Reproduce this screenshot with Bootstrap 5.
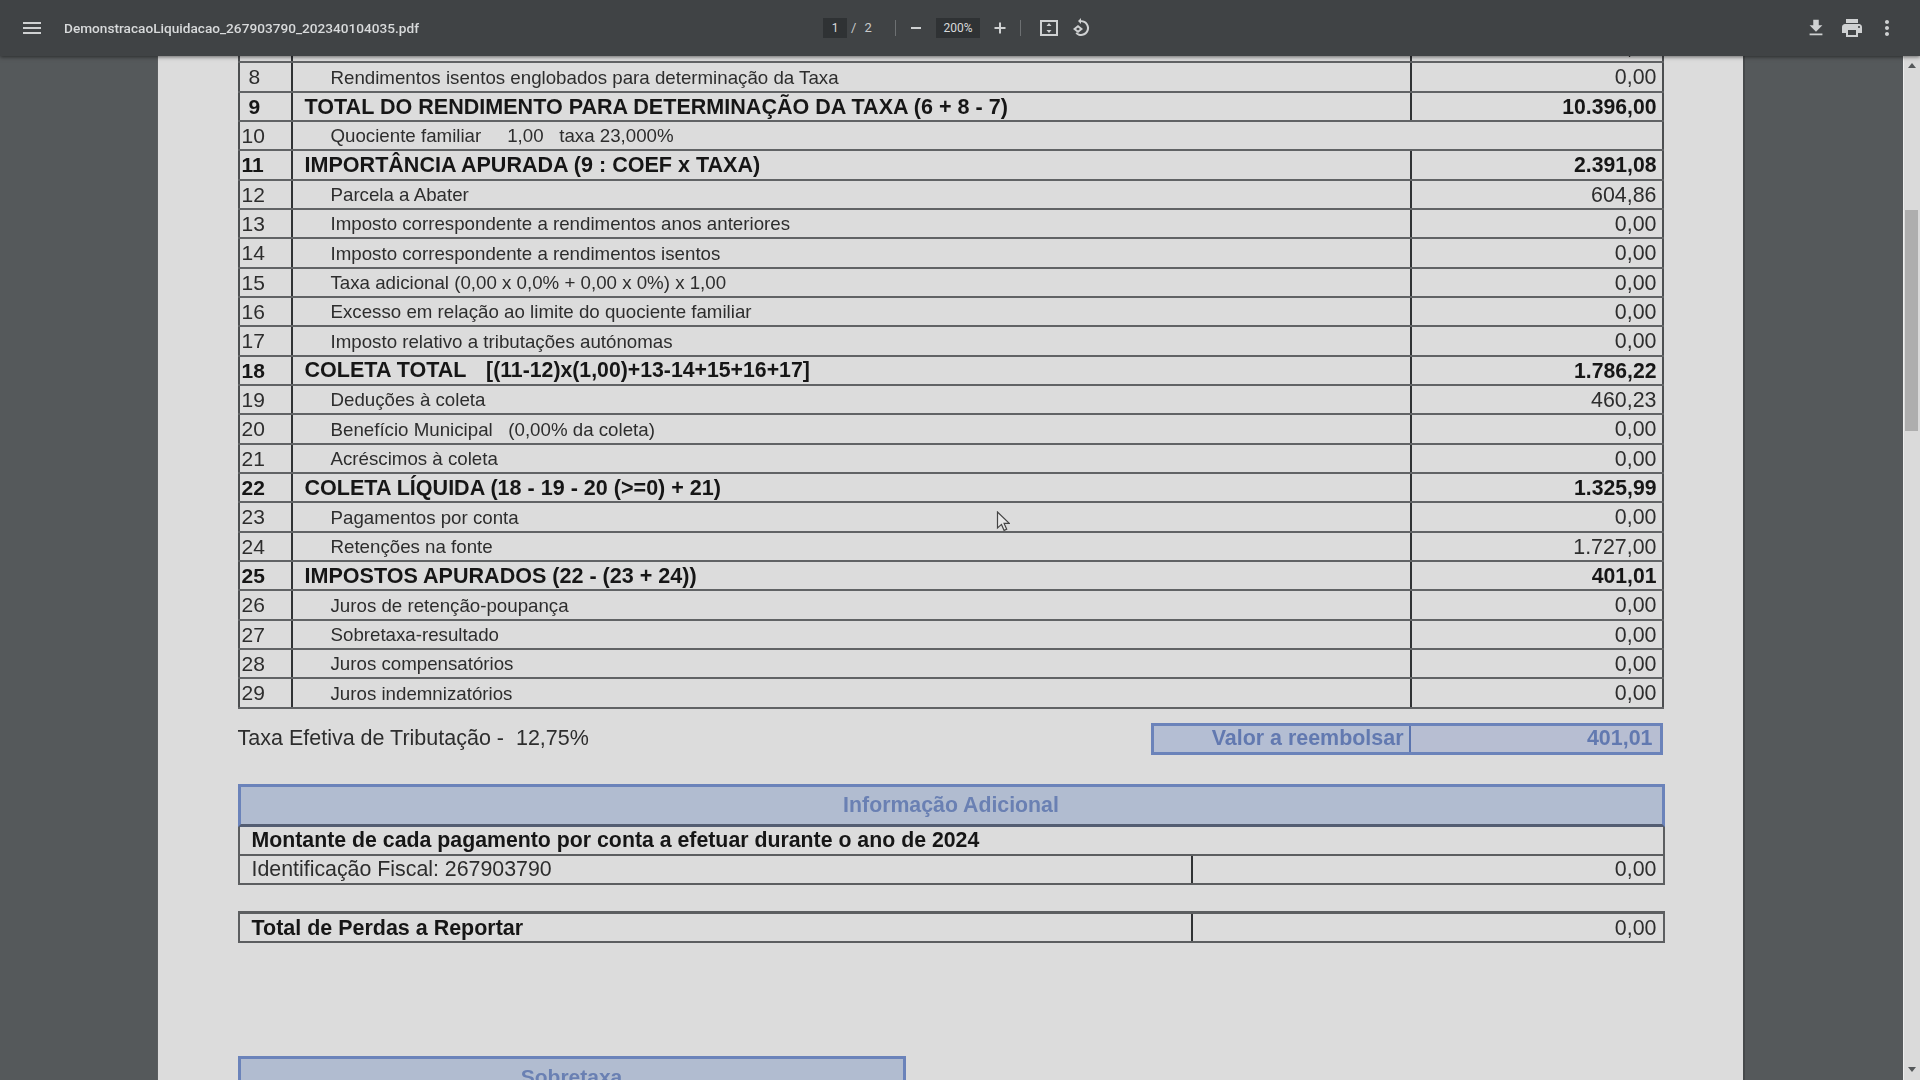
<!DOCTYPE html>
<html lang="pt">
<head>
<meta charset="utf-8">
<title>Demonstracao</title>
<link href="https://cdn.jsdelivr.net/npm/bootstrap@5.3.0/dist/css/bootstrap.min.css" rel="stylesheet">
<style>
html,body{height:100%;overflow:hidden;background:#55595b;font-family:"Liberation Sans",Arial,sans-serif;}
.pv-shell{height:1080px;width:1920px;}
.pv-bar{height:56px;background:#404345;color:#d8dadb;box-shadow:0 1px 4px rgba(0,0,0,.55);z-index:2;flex:none;position:relative;font-family:Roboto,sans-serif;}
.pv-ico{fill:#cfd1d2;display:block;flex:none;}
.pv-menu{margin-left:20px;margin-right:20px;}
.pv-title{font-size:13.65px;font-weight:500;width:759px;white-space:nowrap;filter:blur(.3px);}
.pv-pagebox{width:24px;height:20px;background:#2f3234;text-align:center;font-size:12px;line-height:20px;}
.pv-of{font-size:13px;color:#c9cbcc;margin-left:4px;width:44px;word-spacing:5px;}
.pv-sep{width:1px;height:16px;background:#6d7072;}
.pv-zoom{width:44px;height:20px;background:#2f3234;text-align:center;font-size:12px;line-height:20px;}
.pv-gap-fit{margin-left:17px;}
.pv-gap-rot{margin-left:10px;}
.pv-gap-dl{margin-left:713px;}
.pv-gap-pr{margin-left:13px;}
.pv-gap-more{margin-left:11px;}
.pv-body{height:1024px;}
.pv-view{flex:1 1 auto;overflow:hidden;background:#55595b;}
.pv-sheet{width:1588px;margin-right:1px;height:1024px;background:#dcdcdc;padding:0 78px 0 79.5px;border-left:1px solid #5b5e60;border-right:2px solid #46494b;color:#2d2d2d;filter:blur(.45px);flex:none;}
.pv-table{width:1426px;table-layout:fixed;border-collapse:collapse;margin:-23px 0 0;}
.pv-table td{height:29.33px;padding:0;border-bottom:2px solid #616365;line-height:1;white-space:nowrap;overflow:hidden;font-size:18.72px;vertical-align:middle;}
.pv-table .pv-n{width:53px;font-size:21px;border-left:2px solid #4c4e50;border-right:2px solid #303234;padding-left:2px;}
.pv-table .pv-n.pv-one{padding-left:9px;}
.pv-table .pv-v{width:251.5px;font-size:21.4px;text-align:right;border-left:2px solid #303234;border-right:2px solid #4c4e50;padding-right:5px;padding-top:2px;}
.pv-table .pv-l{padding-left:38px;padding-top:2px;}
.pv-table .pv-b{font-weight:700;color:#161616;font-size:21px;}
.pv-table td.pv-lb{padding-left:12px;font-size:21.55px;}
.pv-table .pv-v.pv-b{font-size:21.2px;padding-top:0;}
.pv-table .pv-wide{border-right:2px solid #4c4e50;}
.pv-brk{font-size:21.25px;margin-left:2px;}
.pv-taxa{height:32px;margin-top:14px;width:1425px;}
.pv-taxatxt{font-size:21.5px;}
.pv-reemb{width:512px;height:32px;background:#b4bed3;border:3px solid #6b83ba;color:#6279b0;font-weight:700;font-size:21.45px;}
.pv-reemb>div{line-height:25px;}
.pv-r1{width:257px;padding-right:5px;text-align:right;border-right:2px solid #5b74af;}
.pv-r2{flex:1;padding-right:7px;text-align:right;background:#b7bed2;}
.pv-info{width:1427px;margin-top:29px;}
.pv-head{height:43px;background:#b1bcd0;border:3px solid #6b83ba;border-bottom:3px solid #535d72;text-align:center;color:#6a80b3;font-weight:700;font-size:21.3px;line-height:37px;}
.pv-row{height:29px;border:2px solid #5c5e60;border-top:0;font-size:21.35px;line-height:27px;}
.pv-row .pv-c1{padding-left:12px;flex:none;width:951.5px;white-space:nowrap;}
.pv-row .pv-c2{flex:1;border-left:2px solid #303234;text-align:right;padding-right:6px;font-size:21.4px;}
.pv-row.pv-top{border-top:3px solid #5c5e60;height:32px;margin-top:26px;line-height:28px;}
.pv-bold{font-weight:700;color:#161616;font-size:21.3px;}
.pv-mont{padding-left:12px;}
.pv-row .pv-c1.pv-bold{font-size:21.47px;}
.pv-sobre{width:668px;height:41px;margin-top:113px;background:#b1bcd0;border:3px solid #6b83ba;border-bottom:0;text-align:center;color:#6a80b3;font-weight:700;font-size:21px;line-height:36px;}
.pv-track{width:17px;flex:none;background:#dadada;border-left:1px solid #eeeeee;}
.pv-arrow{width:0;height:0;border-left:4px solid transparent;border-right:4px solid transparent;border-bottom:5px solid #55585a;margin:7px auto 0;}
.pv-thumb{width:13px;height:221px;background:#aeaeae;margin:142px 0 0 1px;}
.pv-arrow.pv-down{transform:rotate(180deg);margin-top:636px;}
.pv-cursor{position:absolute;left:996px;top:511px;z-index:3;}
</style>
</head>
<body>
<div class="pv-shell d-flex flex-column position-relative">
  <nav class="pv-bar d-flex align-items-center">
    <svg class="pv-ico pv-menu" width="24" height="24" viewBox="0 0 24 24"><path d="M3 18h18v-2H3v2zm0-5h18v-2H3v2zm0-7v2h18V6H3z"/></svg>
    <div class="pv-title">DemonstracaoLiquidacao_267903790_202340104035.pdf</div>
    <div class="pv-pagebox">1</div>
    <div class="pv-of">/ 2</div>
    <div class="pv-sep"></div>
    <svg class="pv-ico ms-2" width="24" height="24" viewBox="0 0 24 24"><path d="M7 11h10v2H7z"/></svg>
    <div class="pv-zoom ms-2">200%</div>
    <svg class="pv-ico ms-2" width="24" height="24" viewBox="0 0 24 24"><path d="M17.500 13h-4.500v4.500h-2V13H6.500v-2H11V6.500h2V11h4.500z"/></svg>
    <div class="pv-sep ms-2"></div>
    <svg class="pv-ico pv-gap-fit" width="22" height="22" viewBox="0 0 22 22"><path d="M2 3h18v16H2zm2 2v12h14V5z"/><path d="M11 6l2.500 3h-5zM11 16l-2.500-3h5z"/></svg>
    <svg class="pv-ico pv-gap-rot" width="22" height="22" viewBox="0 0 22 22"><path d="M11 3.200V1L8 4l3 3V5a6 6 0 1 1-4.200 10.300l-1.300 1.300A7.900 7.900 0 1 0 11 3.200z"/><path d="M8 8l-5 4 5 4 5-4zm0 2.400L10 12l-2 1.600L6 12z"/></svg>
    <svg class="pv-ico pv-gap-dl" width="22" height="22" viewBox="0 0 24 24"><path d="M19 9h-4V3H9v6H5l7 7 7-7zM5 18v2h14v-2H5z"/></svg>
    <svg class="pv-ico pv-gap-pr" width="24" height="24" viewBox="0 0 24 24"><path d="M19 8H5c-1.660 0-3 1.340-3 3v6h4v4h12v-4h4v-6c0-1.660-1.340-3-3-3zm-3 11H8v-5h8v5zm3-7c-.55 0-1-.45-1-1s.45-1 1-1 1 .45 1 1-.45 1-1 1zm-1-9H6v4h12V3z"/></svg>
    <svg class="pv-ico pv-gap-more" width="24" height="24" viewBox="0 0 24 24"><path d="M12 8c1.100 0 2-.9 2-2s-.9-2-2-2-2 .9-2 2 .9 2 2 2zm0 2c-1.100 0-2 .9-2 2s.9 2 2 2 2-.9 2-2-.9-2-2-2zm0 6c-1.100 0-2 .9-2 2s.9 2 2 2 2-.9 2-2-.9-2-2-2z"/></svg>
  </nav>
  <div class="pv-body d-flex">
    <main class="pv-view d-flex justify-content-center">
      <div class="pv-sheet">
        <table class="pv-table">
          <tbody>
            <tr><td class="pv-n"></td><td class="pv-l"></td><td class="pv-v">0,00</td></tr>
            <tr><td class="pv-n pv-one">8</td><td class="pv-l">Rendimentos isentos englobados para determinação da Taxa</td><td class="pv-v">0,00</td></tr>
            <tr><td class="pv-n pv-one pv-b">9</td><td class="pv-lb pv-b">TOTAL DO RENDIMENTO PARA DETERMINAÇÃO DA TAXA (6 + 8 - 7)</td><td class="pv-v pv-b">10.396,00</td></tr>
            <tr><td class="pv-n">10</td><td class="pv-l pv-wide" colspan="2">Quociente familiar &nbsp;&nbsp;&nbsp; 1,00 &nbsp; taxa 23,000%</td></tr>
            <tr><td class="pv-n pv-b">11</td><td class="pv-lb pv-b">IMPORTÂNCIA APURADA (9 : COEF x TAXA)</td><td class="pv-v pv-b">2.391,08</td></tr>
            <tr><td class="pv-n">12</td><td class="pv-l">Parcela a Abater</td><td class="pv-v">604,86</td></tr>
            <tr><td class="pv-n">13</td><td class="pv-l">Imposto correspondente a rendimentos anos anteriores</td><td class="pv-v">0,00</td></tr>
            <tr><td class="pv-n">14</td><td class="pv-l">Imposto correspondente a rendimentos isentos</td><td class="pv-v">0,00</td></tr>
            <tr><td class="pv-n">15</td><td class="pv-l">Taxa adicional (0,00 x 0,0% + 0,00 x 0%) x 1,00</td><td class="pv-v">0,00</td></tr>
            <tr><td class="pv-n">16</td><td class="pv-l">Excesso em relação ao limite do quociente familiar</td><td class="pv-v">0,00</td></tr>
            <tr><td class="pv-n">17</td><td class="pv-l">Imposto relativo a tributações autónomas</td><td class="pv-v">0,00</td></tr>
            <tr><td class="pv-n pv-b">18</td><td class="pv-lb pv-b">COLETA TOTAL &nbsp; <span class="pv-brk">[(11-12)x(1,00)+13-14+15+16+17]</span></td><td class="pv-v pv-b">1.786,22</td></tr>
            <tr><td class="pv-n">19</td><td class="pv-l">Deduções à coleta</td><td class="pv-v">460,23</td></tr>
            <tr><td class="pv-n">20</td><td class="pv-l">Benefício Municipal &nbsp; (0,00% da coleta)</td><td class="pv-v">0,00</td></tr>
            <tr><td class="pv-n">21</td><td class="pv-l">Acréscimos à coleta</td><td class="pv-v">0,00</td></tr>
            <tr><td class="pv-n pv-b">22</td><td class="pv-lb pv-b">COLETA LÍQUIDA (18 - 19 - 20 (&gt;=0) + 21)</td><td class="pv-v pv-b">1.325,99</td></tr>
            <tr><td class="pv-n">23</td><td class="pv-l">Pagamentos por conta</td><td class="pv-v">0,00</td></tr>
            <tr><td class="pv-n">24</td><td class="pv-l">Retenções na fonte</td><td class="pv-v">1.727,00</td></tr>
            <tr><td class="pv-n pv-b">25</td><td class="pv-lb pv-b">IMPOSTOS APURADOS (22 - (23 + 24))</td><td class="pv-v pv-b">401,01</td></tr>
            <tr><td class="pv-n">26</td><td class="pv-l">Juros de retenção-poupança</td><td class="pv-v">0,00</td></tr>
            <tr><td class="pv-n">27</td><td class="pv-l">Sobretaxa-resultado</td><td class="pv-v">0,00</td></tr>
            <tr><td class="pv-n">28</td><td class="pv-l">Juros compensatórios</td><td class="pv-v">0,00</td></tr>
            <tr><td class="pv-n">29</td><td class="pv-l">Juros indemnizatórios</td><td class="pv-v">0,00</td></tr>
          </tbody>
        </table>
        <div class="pv-taxa d-flex justify-content-between align-items-center">
          <div class="pv-taxatxt">Taxa Efetiva de Tributação - &nbsp;12,75%</div>
          <div class="pv-reemb d-flex"><div class="pv-r1">Valor a reembolsar</div><div class="pv-r2">401,01</div></div>
        </div>
        <section class="pv-info">
          <div class="pv-head">Informação Adicional</div>
          <div class="pv-row pv-bold pv-mont">Montante de cada pagamento por conta a efetuar durante o ano de 2024</div>
          <div class="pv-row d-flex"><div class="pv-c1">Identificação Fiscal: 267903790</div><div class="pv-c2">0,00</div></div>
          <div class="pv-row pv-top d-flex"><div class="pv-c1 pv-bold">Total de Perdas a Reportar</div><div class="pv-c2">0,00</div></div>
        </section>
        <div class="pv-sobre">Sobretaxa</div>
      </div>
    </main>
    <aside class="pv-track">
      <div class="pv-arrow"></div>
      <div class="pv-thumb"></div>
      <div class="pv-arrow pv-down"></div>
    </aside>
  </div>
  <svg class="pv-cursor" width="14" height="22" viewBox="0 0 14 22"><path d="M1.5 1v16l4-3.6 2.6 6 2.6-1.1-2.6-5.9h5.2z" fill="#e8e8e8" stroke="#444" stroke-width="1.2"/></svg>
</div>
<script src="https://cdn.jsdelivr.net/npm/bootstrap@5.3.0/dist/js/bootstrap.bundle.min.js"></script>
</body>
</html>
